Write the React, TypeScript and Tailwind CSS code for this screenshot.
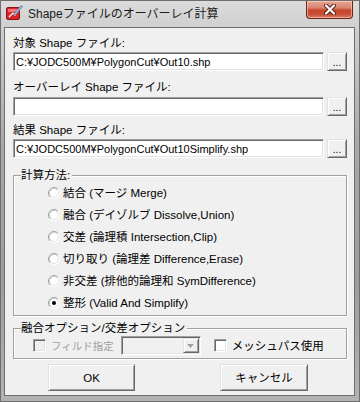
import type { ReactNode } from 'react'

const sunken =
  'border border-t-[#a0a0a0] border-l-[#a0a0a0] border-b-white border-r-white shadow-[inset_1px_1px_0_#696969,inset_-1px_-1px_0_#e3e3e3]'
const raised =
  'border border-t-[#e3e3e3] border-l-[#e3e3e3] border-b-[#696969] border-r-[#696969] shadow-[inset_1px_1px_0_#ffffff,inset_-1px_-1px_0_#a0a0a0] bg-[#f0f0f0]'
const etched = 'border border-[#a0a0a0] shadow-[inset_1px_1px_0_#ffffff,1px_1px_0_#ffffff]'

function TitleIcon() {
  return (
    <svg width="17" height="16" viewBox="0 0 17 16">
      <rect x="0.5" y="2.5" width="13" height="12" rx="1.5" fill="#d7262a" stroke="#8e1116" />
      <rect x="2" y="4" width="10" height="3" fill="#f3757a" />
      <path d="M3 12 L7 8 L9 10 L12 6" stroke="#fff" strokeWidth="1.2" fill="none" />
      <path d="M9 9 L15.5 1.5" stroke="#5a7fb0" strokeWidth="2.4" strokeLinecap="round" />
      <path d="M9 9 L15.5 1.5" stroke="#cfe0f2" strokeWidth="0.9" strokeLinecap="round" />
    </svg>
  )
}

function CloseButton() {
  return (
    <div className="ml-auto mr-[6px] w-[47px] h-[18px] rounded-b-[4px] border border-t-0 border-[#6b2419] bg-[linear-gradient(180deg,#e8a795_0%,#d7836f_40%,#c7432b_55%,#c9513a_80%,#dc7d63_100%)] shadow-[inset_0_0_0_1px_rgba(255,220,210,0.55)] flex items-center justify-center">
      <svg width="14" height="11" viewBox="0 0 14 11">
        <path d="M3 1.5 L11 9.5 M11 1.5 L3 9.5" stroke="#5b1d12" strokeWidth="4" strokeLinecap="round" />
        <path d="M3 1.5 L11 9.5 M11 1.5 L3 9.5" stroke="#ffffff" strokeWidth="2.2" strokeLinecap="round" />
      </svg>
    </div>
  )
}

function Radio({ checked }: { checked?: boolean }) {
  return (
    <svg width="12" height="12" viewBox="0 0 12 12" className="shrink-0">
      <circle cx="6" cy="6" r="5.5" fill="#ffffff" />
      <path d="M2.11 9.89 A5.5 5.5 0 0 1 9.89 2.11" stroke="#a0a0a0" fill="none" />
      <path d="M9.89 2.11 A5.5 5.5 0 0 1 2.11 9.89" stroke="#ffffff" fill="none" />
      <path d="M2.82 9.18 A4.5 4.5 0 0 1 9.18 2.82" stroke="#c8c8c8" fill="none" />
      <path d="M9.18 2.82 A4.5 4.5 0 0 1 2.82 9.18" stroke="#e3e3e3" fill="none" />
      {checked && <circle cx="6" cy="6" r="2" fill="#000000" />}
    </svg>
  )
}

function Check({ disabled }: { disabled?: boolean }) {
  return (
    <div
      className={
        'w-[13px] h-[13px] shrink-0 ' +
        sunken +
        (disabled ? ' bg-[#f0f0f0]' : ' bg-white')
      }
    />
  )
}

function FileRow({ value }: { value: string }) {
  return (
    <div className="flex h-[19px] gap-[3px]">
      <div className={'flex-1 bg-white pl-[2px] flex items-center text-[11px] ' + sunken}>{value}</div>
      <div className={'w-[20px] h-[19px] flex items-end justify-center pb-[2px] text-[10px] leading-[10px] ' + raised}>
        ...
      </div>
    </div>
  )
}

function Group({ label, className, children }: { label: string; className: string; children: ReactNode }) {
  return (
    <div className={'relative ' + etched + ' ' + className}>
      <span className="absolute left-[7px] top-[-8px] bg-[#f0f0f0] pr-[2px] h-[14px]">{label}</span>
      {children}
    </div>
  )
}

const methods = [
  '結合 (マージ Merge)',
  '融合 (デイゾルブ Dissolve,Union)',
  '交差 (論理積 Intersection,Clip)',
  '切り取り (論理差 Difference,Erase)',
  '非交差 (排他的論理和 SymDifference)',
  '整形 (Valid And Simplify)',
]

export default function App() {
  return (
    <div className="w-[360px] h-[402px] overflow-hidden border border-[#6f6f6f] bg-[linear-gradient(180deg,#dcdcdc_0%,#cfcfcf_7%,#a9a9a9_35%,#9d9d9d_70%,#b3b3b3_100%)] font-[family-name:Liberation_Sans,Noto_Sans_CJK_JP,sans-serif] text-[11.5px] leading-[14px] text-black">
      {/* Title bar */}
      <div className="h-[26px] flex items-start">
        <div className="mt-[4px] ml-[5px]">
          <TitleIcon />
        </div>
        <div className="ml-[5px] mt-[5px] text-[12px] leading-[16px] text-[#1b1b1b]">Shapeファイルのオーバーレイ計算</div>
        <CloseButton />
      </div>

      {/* Client area */}
      <div className="ml-[3px] w-[351px] h-[369px] border border-[#6e6e6e] bg-[#f0f0f0] flex flex-col pl-[8px] pr-[7px] pt-[8px]">
        <div className="h-[14px]">対象 Shape ファイル:</div>
        <div className="mt-[2px]">
          <FileRow value="C:¥JODC500M¥PolygonCut¥Out10.shp" />
        </div>
        <div className="h-[14px] mt-[9px]">オーバーレイ Shape ファイル:</div>
        <div className="mt-[3px]">
          <FileRow value="" />
        </div>
        <div className="h-[14px] mt-[7px]">結果 Shape ファイル:</div>
        <div className="mt-[2px]">
          <FileRow value="C:¥JODC500M¥PolygonCut¥Out10Simplify.shp" />
        </div>

        <Group label="計算方法:" className="mt-[17px] h-[141px] pt-[6px] pl-[34px]">
          {methods.map((m, i) => (
            <div key={m} className="h-[22px] flex items-center gap-[3px]">
              <Radio checked={i === 5} />
              <span>{m}</span>
            </div>
          ))}
        </Group>

        <Group label="融合オプション/交差オプション" className="mt-[12px] h-[31px] pt-[4px] pl-[19px] flex items-center">
          <Check disabled />
          <span className="ml-[5px] text-[10.5px] text-[#a0a0a0] whitespace-nowrap">フィルド指定</span>
          <div className={'ml-[7px] w-[80px] h-[19px] bg-[#f0f0f0] flex justify-end p-[1px] ' + sunken}>
            <div className={'w-[16px] h-full flex items-center justify-center ' + raised}>
              <svg width="7" height="4" viewBox="0 0 7 4">
                <path d="M0 0 H7 L3.5 4 Z" fill="#a0a0a0" />
              </svg>
            </div>
          </div>
          <div className="ml-[13px]">
            <Check />
          </div>
          <span className="ml-[5px]">メッシュパス使用</span>
        </Group>

        <div className="mt-[5px] flex ml-[35px] gap-[85px]">
          <div className={'w-[87px] h-[27px] flex items-center justify-center ' + raised}>OK</div>
          <div className={'w-[88px] h-[27px] flex items-center justify-center ' + raised}>キャンセル</div>
        </div>
      </div>
    </div>
  )
}
